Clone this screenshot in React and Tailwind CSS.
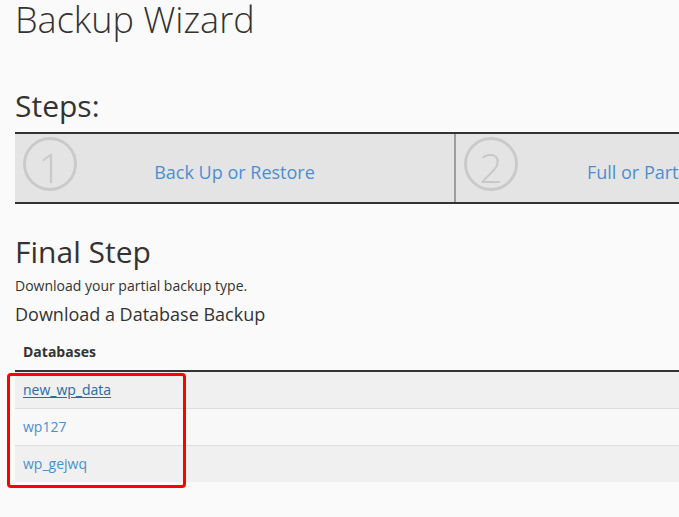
import React from "react";

function StepCircle({ n }) {
  return (
    <svg width="54" height="54" viewBox="0 0 54 54" className="shrink-0">
      <circle cx="27" cy="27" r="25.5" fill="none" stroke="#cacaca" strokeWidth="3" />
      <text
        x="27"
        y="45.5"
        textAnchor="middle"
        fontSize="41"
        fontWeight="300"
        fill="#c8c8c8"
        fontFamily="'Open Sans', sans-serif"
      >
        {n}
      </text>
    </svg>
  );
}

function StepCell({ n, label, divider }) {
  return (
    <div
      className={
        "w-[441px] shrink-0 flex items-start pl-[8px] " +
        (divider ? "border-r-2 border-[#9e9e9e]" : "")
      }
    >
      <div className="mt-[3px]">
        <StepCircle n={n} />
      </div>
      <div className="flex-1 text-center pr-[62px] mt-[26px] text-[18px] leading-[25.7px] text-[#4a8fd4] whitespace-nowrap">
        {label}
      </div>
    </div>
  );
}

export default function App() {
  const rows = [
    { name: "new_wp_data", active: true },
    { name: "wp127" },
    { name: "wp_gejwq" },
  ];
  return (
    <div
      className="relative w-[679px] h-[517px] overflow-hidden bg-[#fafafa] text-[#333]"
      style={{ fontFamily: "'Open Sans', 'Noto Sans', sans-serif" }}
    >
      <div className="w-[1000px] pl-[15px]">
        <h1 className="text-[36px] leading-[39.6px] font-light m-0">Backup Wizard</h1>
        <h2 className="mt-[49.8px] text-[30px] leading-[33px] font-normal">Steps:</h2>
        <div className="mt-[9.6px] h-[72px] border-y-2 border-[#333] bg-[#e4e4e4] flex">
          <StepCell n="1" label="Back Up or Restore" divider />
          <StepCell n="2" label="Full or Partial Backup" divider />
        </div>
        <h2 className="mt-[30.6px] text-[30px] leading-[33px] font-normal">Final Step</h2>
        <p className="mt-[8.7px] text-[14px] leading-[20px]">Download your partial backup type.</p>
        <h3 className="mt-[8.5px] text-[18px] leading-[19.8px] font-normal">Download a Database Backup</h3>
        <div className="mt-[9.7px]">
          <div className="px-[8px] pt-[8px] pb-[8px] border-b-2 border-[#333] text-[14px] leading-[20px] font-bold">
            Databases
          </div>
          {rows.map((r, i) => (
            <div
              key={r.name}
              className={
                "px-[8px] py-[8px] text-[14px] leading-[20px] " +
                (i > 0 ? "border-t border-[#dddddd] " : "") +
                (i % 2 === 0 ? "bg-[#f0f0f0]" : "bg-[#f8f8f8]")
              }
            >
              <a
                className={
                  r.active
                    ? "text-[#2a6aa4] underline underline-offset-2"
                    : "text-[#4a8fd4]"
                }
              >
                {r.name}
              </a>
            </div>
          ))}
        </div>
      </div>
      <div className="absolute left-[7px] top-[373px] w-[179px] h-[115px] border-[3px] border-[#ff0000] rounded-[4px] pointer-events-none" />
    </div>
  );
}
